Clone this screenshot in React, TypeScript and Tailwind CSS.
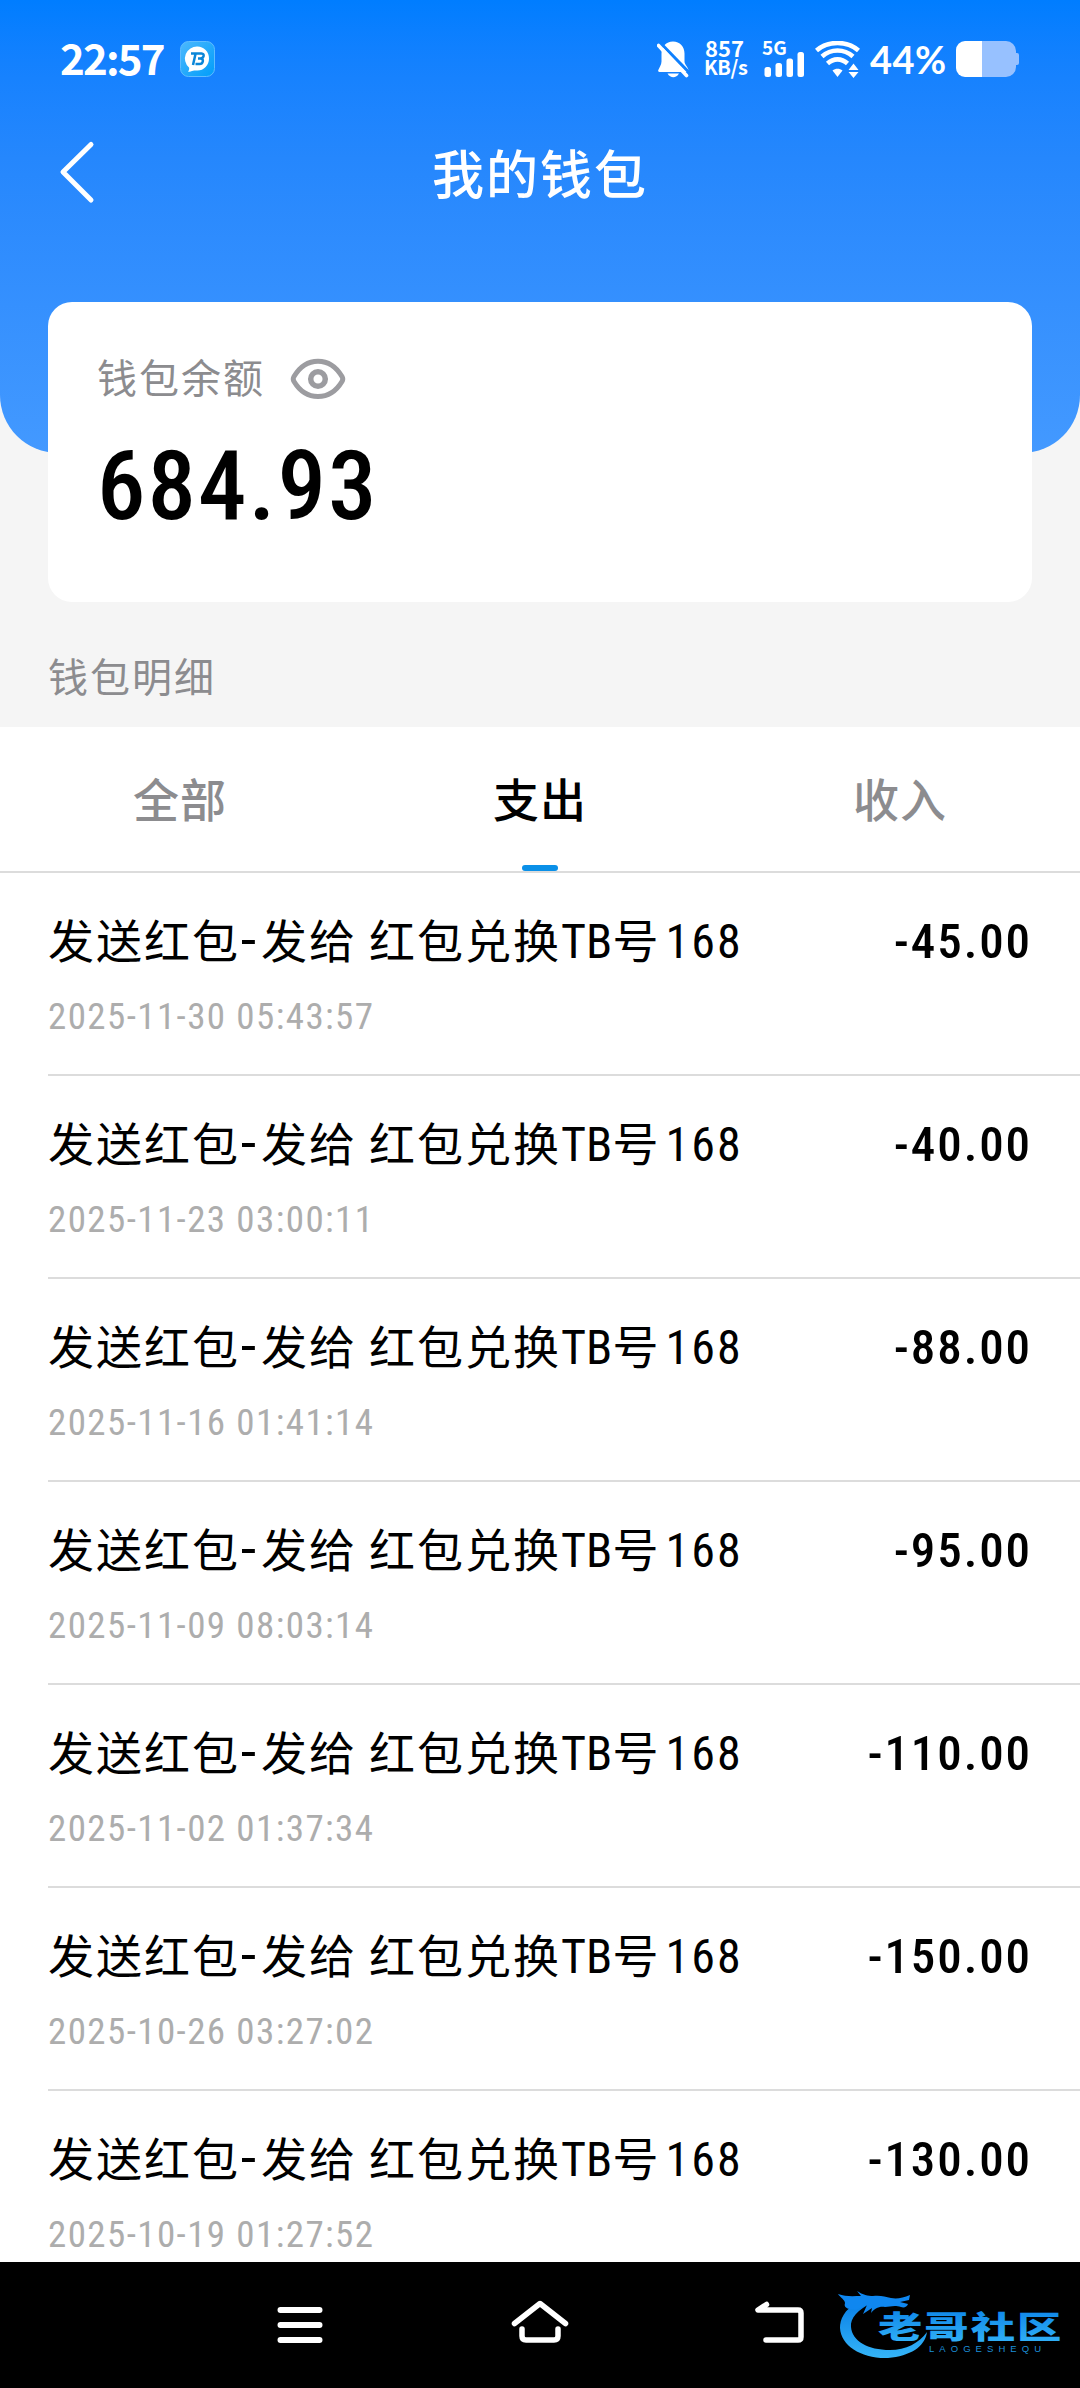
import React, { useState } from 'react';

type Tab = 'all' | 'expense' | 'income';

interface WalletRecord {
  title: string;
  time: string;
  amount: string;
}

const tabs: { key: Tab; label: string }[] = [
  { key: 'all', label: '全部' },
  { key: 'expense', label: '支出' },
  { key: 'income', label: '收入' },
];

const title = '发送红包-发给 红包兑换TB号168';

const records: WalletRecord[] = [
  { title, time: '2025-11-30 05:43:57', amount: '-45.00' },
  { title, time: '2025-11-23 03:00:11', amount: '-40.00' },
  { title, time: '2025-11-16 01:41:14', amount: '-88.00' },
  { title, time: '2025-11-09 08:03:14', amount: '-95.00' },
  { title, time: '2025-11-02 01:37:34', amount: '-110.00' },
  { title, time: '2025-10-26 03:27:02', amount: '-150.00' },
  { title, time: '2025-10-19 01:27:52', amount: '-130.00' },
];

const StatusBar = () => (
  <div className="flex h-[118px] items-start justify-between pl-[60px] pr-[61px] pt-[41px] text-white">
    <div className="flex h-9 items-center">
      <span className="-mt-1 w-[120px] font-['Noto_Sans_CJK_SC',sans-serif] text-[42px] font-bold leading-9 tracking-[-1.800px]">22:57</span>
      {/* running app badge */}
      <svg width="35" height="36" viewBox="0 0 35 36">
        <defs>
          <linearGradient id="badge" x1="0" y1="0" x2="1" y2="1">
            <stop offset="0" stopColor="#4cb8fd" />
            <stop offset="1" stopColor="#009dfa" />
          </linearGradient>
        </defs>
        <rect x="0.5" y="0.5" width="34" height="35" rx="8" fill="url(#badge)" stroke="#5fbcff" />
        <path d="M17.500 5.500a11.500 12 0 0 1 0 24c-3 0-4-.5-5.500.5-1.500.8-3 .8-4 .5 1-1 1.500-2.500 1-4A12 12 0 0 1 17.500 5.500z" fill="#fff" />
        <path d="M11 12.500h10.500c3.500.3 2.500 4.500-1 5 4 .5 2.500 5.500-1 5.500H15.500M15.500 13l-2.500 11M18 17.500h3" fill="none" stroke="#0a86d8" strokeWidth="2.500" />
      </svg>
    </div>

    <div className="flex h-9 items-center">
      <svg width="33" height="37" viewBox="0 0 33 37" className="mr-[14px]">
        <path d="M16 0.500c7 0 11.500 5 11.500 12v8c0 3 4 6 4 9 0 1-.5 1.500-1.500 1.500H2.500c-1 0-1.500-.7-1.300-1.700C2 27 4.500 24 4.500 20.500v-8c0-7 4.500-12 11.500-12z" fill="#fff" />
        <path d="M10.500 32.500h11.500c-1.500 2.500-3.500 3.800-5.700 3.800s-4.300-1.300-5.800-3.800z" fill="#fff" />
        <path d="M3 1.500l30 31" stroke="#0f80fe" strokeWidth="3" />
        <path d="M1.500 4.500l28 30" stroke="#fff" strokeWidth="3.600" strokeLinecap="round" />
      </svg>
      <div className="-mt-[3px] flex w-[58px] flex-col font-['Noto_Sans_CJK_SC',sans-serif] font-bold">
        <span className="pl-px text-[22px] leading-[18px]">857</span>
        <span className="text-[20px] leading-[22px] tracking-[-0.400px]">KB/s</span>
      </div>
      <div className="mr-[10px] h-9 w-[43px]">
        <svg width="43" height="36" viewBox="0 0 43 36" className="overflow-visible">
          <text x="0" y="14" fontSize="19" fontWeight="700" fill="#fff" fontFamily="Noto Sans CJK SC, sans-serif">5G</text>
          <rect x="2.500" y="26" width="6.500" height="10" rx="2.500" fill="#fff" />
          <rect x="13.500" y="22" width="6.500" height="14" rx="2.500" fill="#fff" />
          <rect x="24.500" y="17.500" width="6.500" height="18.500" rx="2.500" fill="#fff" />
          <rect x="35.500" y="11" width="6.500" height="25" rx="2.500" fill="#fff" />
        </svg>
      </div>
      <svg width="45" height="37" viewBox="0 0 45 37" fill="none" stroke="#fff" strokeWidth="4.600" className="mr-[10px]">
        <path d="M1.500 9.500C13-.5 32-.5 43.500 9.500" />
        <path d="M7 15.500C16 7.500 29 7.500 38 15.500" />
        <path d="M12.500 22.500c6-5.500 14-5.500 20 0" />
        <path d="M17.500 29.500c3-2.500 7-2.500 10 0l-5 6.500z" fill="#fff" stroke="none" />
        <path d="M33.500 29l5-6.500 5 6.500zM33.500 31h10l-5 6z" fill="#fff" stroke="none" />
      </svg>
      <span className="w-[86px] font-['Lato',sans-serif] text-[38px] font-bold leading-9 tracking-[0.400px]">44%</span>
      <svg width="63" height="36" viewBox="0 0 63 36">
        <path d="M26 0h24a10 10 0 0 1 10 10v2h1q2 0 2 2v8q0 2-2 2h-1v2a10 10 0 0 1-10 10H26z" fill="#97c1ff" />
        <path d="M26 0H9a9 9 0 0 0-9 9v18a9 9 0 0 0 9 9h17z" fill="#fff" />
      </svg>
    </div>
  </div>
);

const EyeIcon = () => (
  <svg width="56" height="42" viewBox="0 0 56 42" fill="none" stroke="#9c9ca0" strokeWidth="5">
    <path d="M4 18.500C16-2 40-2 52 18.500q1.500 2.500 0 5C40 43.500 16 43.500 4 23.500q-1.500-2.500 0-5z" />
    <circle cx="28" cy="21" r="7.300" strokeWidth="5.500" />
  </svg>
);

// Latin runs use a narrower face than the Chinese ones
const MixedText = ({ text }: { text: string }) => (
  <>
    {text.split(/([A-Za-z]+|[0-9]+|-| )/).filter(Boolean).map((part, i) =>
      /^[A-Za-z]+$/.test(part) ? (
        <span key={i} className="font-['Roboto',sans-serif] text-[48px] tracking-[0.200px] [font-stretch:85%]">{part}</span>
      ) : /^[0-9]+$/.test(part) ? (
        <span key={i} className="ml-[5px] font-['Roboto',sans-serif] text-[48px] tracking-[2px] [font-stretch:85%]">{part}</span>
      ) : part === '-' ? (
        <span key={i} className="ml-px font-['Roboto',sans-serif] text-[54px] tracking-[5px]">-</span>
      ) : part === ' ' ? (
        <span key={i} className="inline-block w-3">&nbsp;</span>
      ) : (
        <span key={i}>{part}</span>
      )
    )}
  </>
);

const RecordRow = ({ record }: { record: WalletRecord }) => (
  <div className="ml-12 h-[203px] shrink-0 border-b-2 border-[#dcdcdc] pr-12">
    <div className="flex h-[106px] items-end justify-between whitespace-nowrap text-black">
      <span className="h-[77px] text-[46px] leading-[72px] tracking-[2px]">
        <MixedText text={record.title} />
      </span>
      <span className="h-[73px] font-['Roboto',sans-serif] text-[49px] font-medium leading-[72px] tracking-[1.900px] [font-stretch:85%]">
        {record.amount}
      </span>
    </div>
    <div className="h-[75px] font-['Roboto',sans-serif] text-[37px] leading-[75px] tracking-[1.400px] text-[#adadad] [font-stretch:85%]">
      {record.time}
    </div>
  </div>
);

const Watermark = () => (
  <svg width="226" height="84" viewBox="0 0 226 84">
    <defs>
      <linearGradient id="wave" x1="0" y1="0" x2="0" y2="1">
        <stop offset="0" stopColor="#087ee6" />
        <stop offset="1" stopColor="#35b5f8" />
      </linearGradient>
    </defs>
    {/* dragon body, then head with horns */}
    <path d="M20 21C6 29 2 38 2 47c1 18 22 31 48 30 22-2 37-11 39-26-8 11-21 18-37 18-22 0-38-9-39-23-1-9 7-17 20-24z" fill="url(#wave)" />
    <path d="M0 13c8 3 16 2 23 2l-4-5c6 4 11 5 16 5 8-1 12 1 18 2s12 0 19-3l-1 5-9 2 8 2c-1 3-4 4-7 3-7-2-11 0-16 0-6-1-11 2-14 6l1-5-9 6 4-9-11 5c-6-1-13-1-11-7C7 19 2 16 0 13z" fill="#0f87f0" />
    <text transform="translate(40 57) scale(1.430 1)" fontSize="31" fontWeight="900" letterSpacing="1.400" fill="url(#wave)" fontFamily="Noto Sans CJK SC, sans-serif">老哥社区</text>
    <text x="91" y="71" fontSize="9.500" textLength="112" fill="#1c8fd8" fontFamily="Liberation Sans, sans-serif">LAOGESHEQU</text>
  </svg>
);

const SystemNav = () => (
  <div className="flex h-[126px] shrink-0 items-start bg-black pt-[34px]">
    <svg width="58" height="52" viewBox="0 0 58 52" className="ml-[271px] mr-[182px]" stroke="#fff" strokeWidth="6" strokeLinecap="round">
      <path d="M9.500 14h39M9.500 29h39M9.500 44h39" />
    </svg>
    <svg width="58" height="52" viewBox="0 0 58 52" fill="none" stroke="#fff" strokeWidth="5.500" strokeLinecap="round" strokeLinejoin="round">
      <path d="M3.500 27.500L29 7.500 54.500 27.500" />
      <path d="M11 33v7q0 4 4 4h28q4 0 4-4v-7" />
    </svg>
    <svg width="52" height="52" viewBox="0 0 52 52" className="ml-[185px]" fill="none" stroke="#fff" strokeWidth="5.500" strokeLinecap="round" strokeLinejoin="round">
      <path d="M12.500 8.500L4 14h40q3 0 3 3v24q0 3-3 3H12" />
    </svg>
    <div className="-mt-[15px] ml-[32px]">
      <Watermark />
    </div>
  </div>
);

const App = () => {
  const [activeTab, setActiveTab] = useState<Tab>('expense');
  const [visible, setVisible] = useState(true);

  return (
    <div className="flex h-[2388px] w-[1080px] flex-col overflow-hidden bg-[#f5f5f5] font-['Noto_Sans_CJK_SC',sans-serif]">
      <header className="h-[453px] shrink-0 rounded-b-[58px] bg-linear-to-b from-[#007dff] via-[#2587fd] via-35% to-[#4399ff]">
        <StatusBar />
        <div className="flex h-[108px] items-center px-[58px]">
          <button className="w-[100px]">
            <svg width="38" height="64" viewBox="0 0 38 64" fill="none" stroke="#fff" strokeWidth="5" strokeLinecap="round" strokeLinejoin="round">
              <path d="M33 4.500L5 32l28 28" />
            </svg>
          </button>
          <h1 className="flex-1 text-center text-[52px] font-medium leading-none tracking-[2px] text-white">我的钱包</h1>
          <div className="w-[100px]" />
        </div>
      </header>

      <section className="mx-12 -mt-[151px] h-[300px] shrink-0 rounded-3xl bg-white pl-[49px] pt-[50px]">
        <div className="flex h-[54px] items-center">
          <span className="-mt-[6px] w-[193px] text-[40px] leading-[54px] tracking-[2px] text-[#8c8c8f]">钱包余额</span>
          <button onClick={() => setVisible(!visible)}>
            <EyeIcon />
          </button>
        </div>
        <div className="mt-[20px] font-['Roboto',sans-serif] text-[97px] font-medium leading-[120px] tracking-[2px] text-black [font-stretch:85%]">
          {visible ? '684.93' : '****'}
        </div>
      </section>

      <h2 className="h-[125px] shrink-0 pl-12 pt-[46px] text-[40px] leading-[54px] tracking-[2px] text-[#8c8c8f]">钱包明细</h2>

      <nav className="flex h-[146px] shrink-0 border-b-2 border-[#dcdcdc] bg-white">
        {tabs.map((tab) => (
          <button
            key={tab.key}
            onClick={() => setActiveTab(tab.key)}
            className={`flex flex-1 flex-col items-center justify-between pt-[36px] text-[46px] font-medium leading-[68px] tracking-[1px] ${
              activeTab === tab.key ? 'text-black' : 'text-[#8c8c8f]'
            }`}
          >
            {tab.label}
            {activeTab === tab.key && <span className="h-[6px] w-9 rounded-[3px] bg-[#0a90e8]" />}
          </button>
        ))}
      </nav>

      <main className="flex min-h-0 flex-1 flex-col overflow-hidden bg-white">
        {records.map((record) => (
          <RecordRow key={record.time} record={record} />
        ))}
      </main>

      <SystemNav />
    </div>
  );
};

export default App;
